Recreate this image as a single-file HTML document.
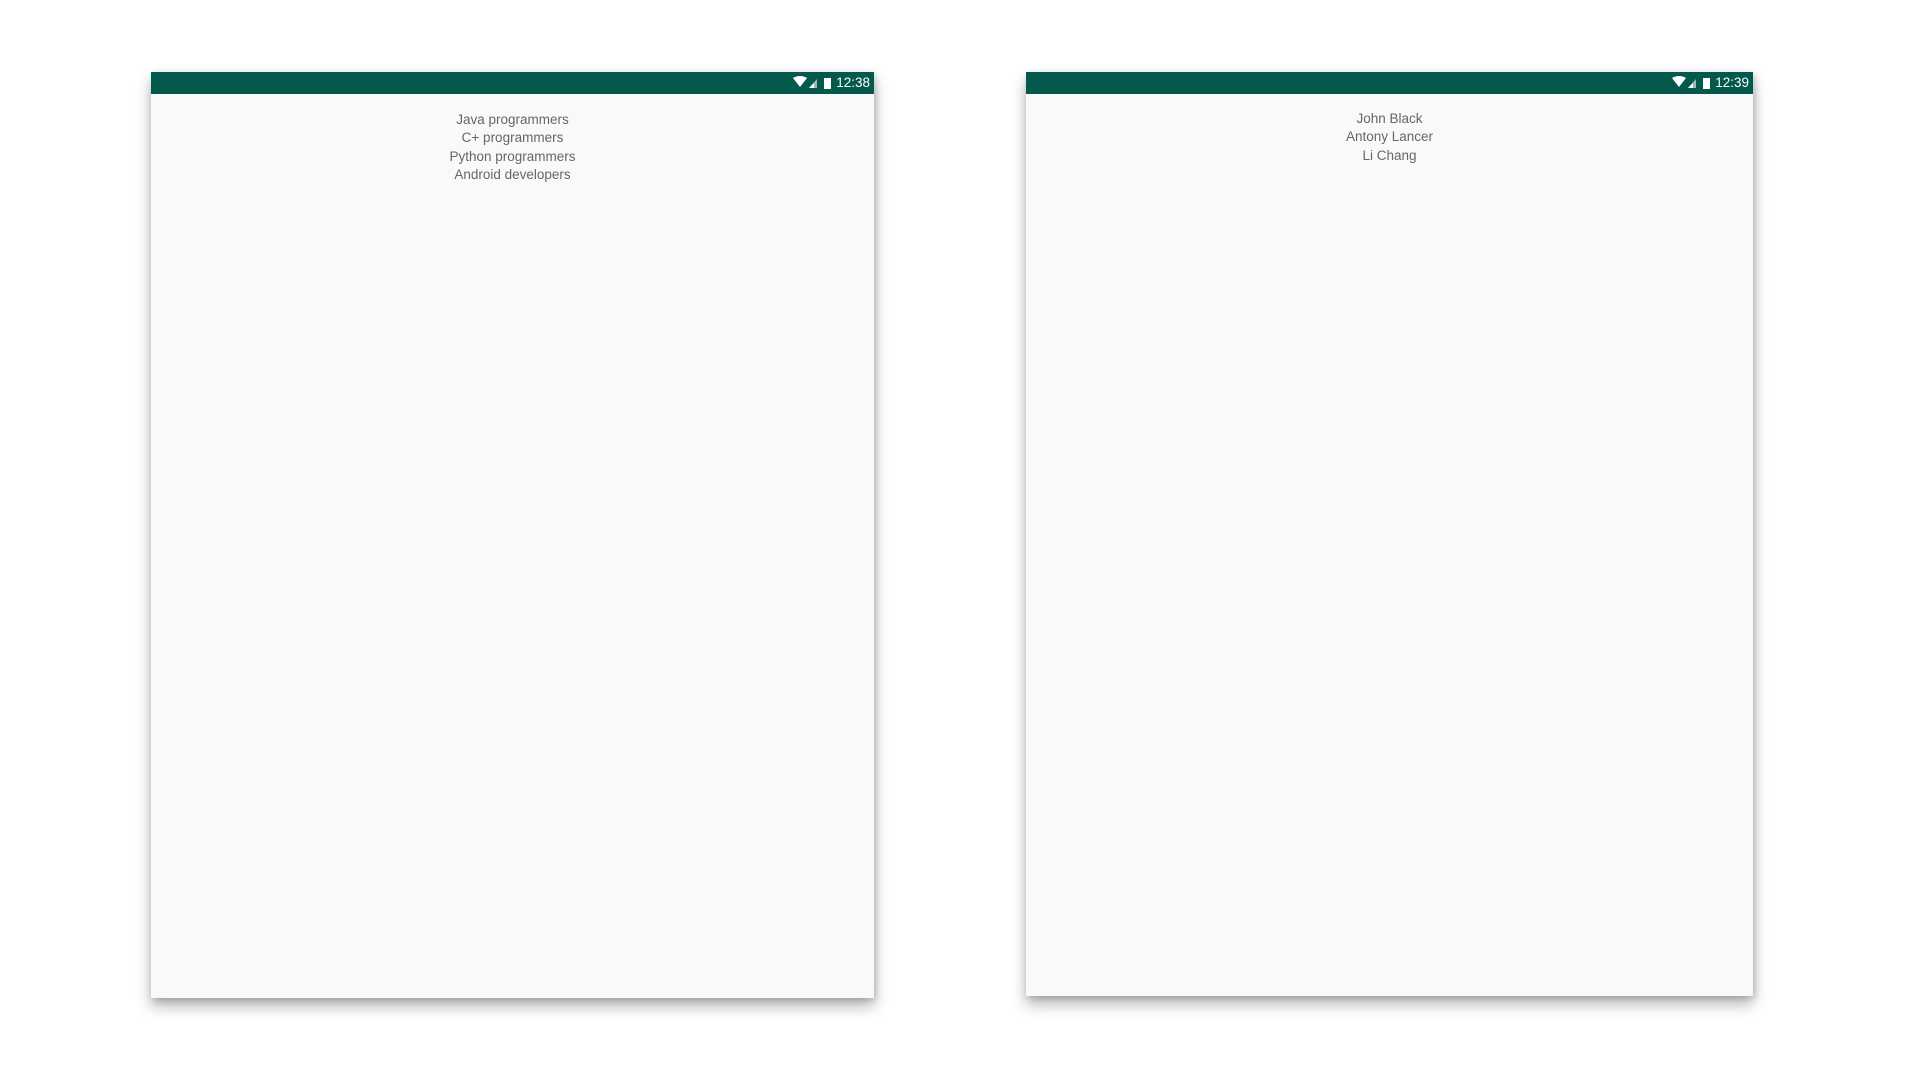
<!DOCTYPE html><html><head><style>
body{margin:0;width:1920px;height:1080px;background:#fff;position:relative;overflow:hidden;font-family:"Liberation Sans",sans-serif}
.f{position:absolute;background:#f9f9f9;box-shadow:0 8px 14px rgba(0,0,0,.3),2px 2px 6px rgba(0,0,0,.15)}
.bar{position:absolute;left:0;right:0;top:0;height:22px;background:#03594c;color:#fff;font-size:13.5px}
.st{position:absolute;right:4px;top:3px;display:flex;align-items:center;gap:4px}
.t{position:absolute;left:0;right:0;text-align:center;color:#666;font-size:13.5px;line-height:18.3px}
</style></head><body>
<div class="f" style="left:151px;top:72px;width:723px;height:926px">
<div class="bar"><div class="st"><svg width="40" height="14" viewBox="0 0 40 14"><path d="M1 2Q8-2 15 2L8 11Z" fill="#fff"/><path d="M17 12L25 3V12Z" fill="#fff" opacity=".6"/><path d="M17 12L22 7V12Z" fill="#fff"/><rect x="32" y="2" width="7" height="11" fill="#fff"/></svg><span>12:38</span></div></div>
<div class="t" style="top:39px">Java programmers<br>C+ programmers<br>Python programmers<br>Android developers</div>
</div>
<div class="f" style="left:1026px;top:72px;width:727px;height:924px">
<div class="bar"><div class="st"><svg width="40" height="14" viewBox="0 0 40 14"><path d="M1 2Q8-2 15 2L8 11Z" fill="#fff"/><path d="M17 12L25 3V12Z" fill="#fff" opacity=".6"/><path d="M17 12L22 7V12Z" fill="#fff"/><rect x="32" y="2" width="7" height="11" fill="#fff"/></svg><span>12:39</span></div></div>
<div class="t" style="top:38px">John Black<br>Antony Lancer<br>Li Chang</div>
</div>
</body></html>
